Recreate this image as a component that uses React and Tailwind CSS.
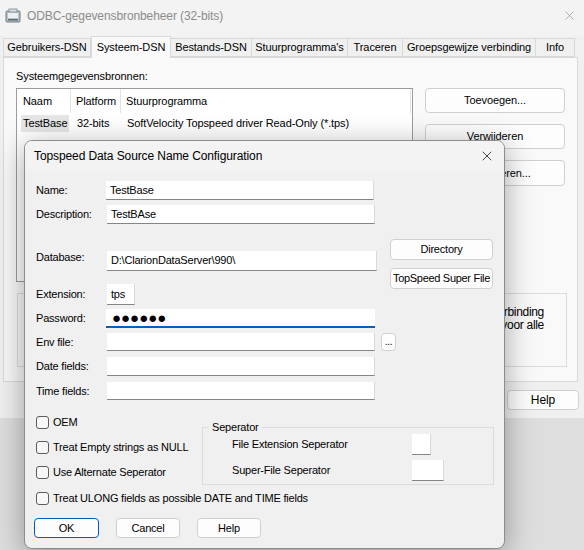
import { X } from "lucide-react";

function Btn({ children, className = "" }) {
  return (
    <div
      className={`shrink-0 flex items-center justify-center whitespace-nowrap rounded-[4px] border border-[#d0d0d0] bg-[#fdfdfd] ${className}`}
    >
      {children}
    </div>
  );
}

function Box({ className = "", children }) {
  return (
    <div
      className={`shrink-0 flex items-center bg-white border-r border-b border-r-[#dadada] border-b-[#858585] pl-[4px] ${className}`}
    >
      {children}
    </div>
  );
}

function Row({ label, className = "", labelClass = "", children }) {
  return (
    <div className={`flex items-center ${className}`}>
      <div className={`w-[70px] shrink-0 ${labelClass}`}>{label}</div>
      {children}
    </div>
  );
}

function Check({ label, className = "" }) {
  return (
    <div className={`flex items-center h-[14px] whitespace-nowrap ${className}`}>
      <div className="w-[13px] h-[13px] rounded-[3px] border border-[#5c5c5c] bg-[#f7f7f7] mr-[4px]" />
      {label}
    </div>
  );
}

function ParentWindow() {
  const tabs = [
    ["Gebruikers-DSN", "w-[88px]"],
    ["Systeem-DSN", "w-[80px]"],
    ["Bestands-DSN", "w-[81px]"],
    ["Stuurprogramma's", "w-[96px]"],
    ["Traceren", "w-[55px]"],
    ["Groepsgewijze verbinding", "w-[133px]"],
    ["Info", "w-[39px]"],
  ];

  return (
    <div className="h-[418px] bg-[#f0f0f0] flex flex-col text-[11px] tracking-[-0.1px]">
      {/* title bar */}
      <div className="h-[36px] bg-[#f3f3f3] flex items-center pl-[5px] pr-[7px]">
        <svg width="17" height="16" viewBox="0 0 17 16" className="mb-[4px]">
          <rect x="1" y="3" width="14" height="11" rx="1" fill="#b9c3c8" stroke="#6f7a80" />
          <rect x="3" y="5" width="10" height="5" fill="#e9f1f4" />
          <rect x="3" y="11" width="10" height="1.5" fill="#5f6a70" />
          <rect x="4" y="1" width="8" height="3" fill="#d8dee1" stroke="#7d878c" strokeWidth="0.8" />
        </svg>
        <div className="ml-[5px] mb-[4px] text-[12px] text-[#8b8b8b]">
          ODBC-gegevensbronbeheer (32-bits)
        </div>
        <div className="ml-auto mb-[6px]">
          <X size={15} strokeWidth={1} color="#8a8a8a" />
        </div>
      </div>

      {/* tabs */}
      <div className="h-[21px] flex pl-[3px] relative z-10">
        {tabs.map(([t, w], i) =>
          i === 1 ? (
            <div
              key={t}
              className={`${w} h-[22px] flex items-center justify-center border border-b-0 border-[#d9d9d9] bg-[#f9f9f9]`}
            >
              {t}
            </div>
          ) : (
            <div
              key={t}
              className={`${w} h-[19px] mt-[2px] flex items-center justify-center border border-[#d9d9d9] bg-[#f0f0f0] ${
                i === 0 ? "" : "border-l-0"
              }`}
            >
              {t}
            </div>
          )
        )}
      </div>

      {/* panel */}
      <div className="ml-[3px] w-[575px] h-[325px] border border-[#d9d9d9] bg-[#f9f9f9] pl-[12px] pt-[11px] flex flex-col">
        <div className="h-[14px] leading-[14px]">Systeemgegevensbronnen:</div>
        <div className="flex mt-[5px]">
          <div className="w-[397px] h-[194px] border border-[#9c9c9c] bg-white flex flex-col">
            <div className="flex h-[24px] items-center">
              <div className="w-[54px] h-full flex items-center pl-[6px] border-r border-[#e3e3e3]">Naam</div>
              <div className="w-[50px] h-full flex items-center pl-[5px] border-r border-[#e3e3e3]">Platform</div>
              <div className="w-[290px] h-full flex items-center pl-[5px] border-r border-[#e3e3e3]">
                Stuurprogramma
              </div>
            </div>
            <div className="flex h-[17px] mt-[2px] items-center">
              <div className="w-[54px] h-full flex items-center">
                <div className="ml-[4px] w-[48px] h-full flex items-center pl-[2px] bg-[#e6e6e6]">TestBase</div>
              </div>
              <div className="w-[50px] pl-[6px]">32-bits</div>
              <div className="pl-[6px] whitespace-nowrap">SoftVelocity Topspeed driver Read-Only (*.tps)</div>
            </div>
          </div>
          <div className="ml-[12px] flex flex-col gap-[11px]">
            <Btn className="w-[140px] h-[25px]">Toevoegen...</Btn>
            <Btn className="w-[140px] h-[25px]">Verwijderen</Btn>
            <Btn className="w-[140px] h-[26px]">Configureren...</Btn>
          </div>
        </div>
        <div className="ml-[1px] mt-[11px] w-[550px] h-[74px] border border-[#dcdcdc] overflow-hidden flex flex-col items-end pr-[22px] pt-[12px] text-[12px] leading-[13px] tracking-[-0.3px]">
          <div className="whitespace-nowrap">over het maken van een verbinding</div>
          <div className="whitespace-nowrap">systeemgegevensbron is zichtbaar voor alle</div>
        </div>
      </div>

      <div className="flex justify-end pr-[5px] mt-[8px]">
        <Btn className="w-[72px] h-[20px] text-[12px]">Help</Btn>
      </div>
    </div>
  );
}

function Dialog() {
  return (
    <div className="absolute left-[24px] top-[140px] w-[481px] h-[409px] rounded-[8px] border border-[#8c8c8c] bg-[#f0f0f0] shadow-[0_6px_30px_rgba(0,0,0,0.35)] overflow-hidden text-[11px] tracking-[-0.2px]">
      <div className="h-[30px] bg-[#f3f3f3] flex items-center pl-[9px] pr-[9px]">
        <div className="text-[12px] tracking-[-0.1px]">Topspeed Data Source Name Configuration</div>
        <div className="ml-auto">
          <X size={16} strokeWidth={1.2} color="#1a1a1a" />
        </div>
      </div>

      <div className="pl-[11px] pt-[10px]">
        <div className="flex">
          <div className="w-[354px] shrink-0 flex flex-col">
            <Row label="Name:">
              <Box className="w-[268px] h-[19px]">TestBase</Box>
            </Row>
            <Row label="Description:" className="mt-[5px]">
              <Box className="ml-[1px] w-[268px] h-[19px]">TestBAse</Box>
            </Row>
            <Row label="Database:" labelClass="relative -top-[4px]" className="mt-[27px]">
              <Box className="ml-[1px] w-[270px] h-[20px]">D:\ClarionDataServer\990\</Box>
            </Row>
            <Row label="Extension:" className="mt-[13px]">
              <Box className="ml-[1px] w-[28px] h-[21px]">tps</Box>
            </Row>
            <Row label="Password:" className="mt-[4px]">
              <div className="shrink-0 w-[269px] h-[19px] bg-white border-b-2 border-[#005fb8] flex items-center pl-[6px] text-[15px] leading-none tracking-[0px]">
                ●●●●●●
              </div>
            </Row>
            <Row label="Env file:" className="mt-[5px]">
              <Box className="ml-[1px] w-[268px] h-[18px]" />
              <Btn className="ml-[6px] w-[15px] h-[18px] text-[10px] leading-none items-end pb-[3px]">...</Btn>
            </Row>
            <Row label="Date fields:" className="mt-[6px]">
              <Box className="ml-[1px] w-[268px] h-[19px]" />
            </Row>
            <Row label="Time fields:" className="mt-[6px]">
              <Box className="ml-[1px] w-[268px] h-[18px]" />
            </Row>
          </div>
          <div className="flex flex-col gap-[8px] pt-[58px]">
            <Btn className="w-[103px] h-[21px]">Directory</Btn>
            <Btn className="w-[103px] h-[21px] tracking-[-0.3px]">TopSpeed Super File</Btn>
          </div>
        </div>

        <div className="flex mt-[15px]">
          <div className="w-[166px] flex flex-col gap-[11px]">
            <Check label="OEM" />
            <Check label="Treat Empty strings as NULL" />
            <Check label="Use Alternate Seperator" />
          </div>
          <div className="relative mt-[12px] w-[292px] h-[58px] border border-[#dcdcdc] flex flex-col pl-[29px] pt-[6px] gap-[5px]">
            <div className="absolute left-[6px] -top-[8px] px-[3px] bg-[#f0f0f0] leading-[14px]">Seperator</div>
            <div className="flex items-center">
              <div className="w-[180px]">File Extension Seperator</div>
              <Box className="w-[19px] h-[21px]" />
            </div>
            <div className="flex items-center">
              <div className="w-[180px]">Super-File Seperator</div>
              <Box className="w-[32px] h-[21px]" />
            </div>
          </div>
        </div>

        <Check label="Treat ULONG fields as possible DATE and TIME fields" className="mt-[6px]" />

        <div className="flex gap-[17px] mt-[13px] -ml-[2px]">
          <div className="w-[65px] h-[20px] rounded-[4px] border border-[#005fb8] bg-[#fdfdfd] flex items-center justify-center">
            OK
          </div>
          <Btn className="w-[64px] h-[20px]">Cancel</Btn>
          <Btn className="w-[64px] h-[20px]">Help</Btn>
        </div>
      </div>
    </div>
  );
}

export default function App() {
  return (
    <div className="relative w-[584px] h-[550px] overflow-hidden bg-[#dedede] font-['Liberation_Sans',Arial,sans-serif] text-black">
      <ParentWindow />
      <Dialog />
    </div>
  );
}
